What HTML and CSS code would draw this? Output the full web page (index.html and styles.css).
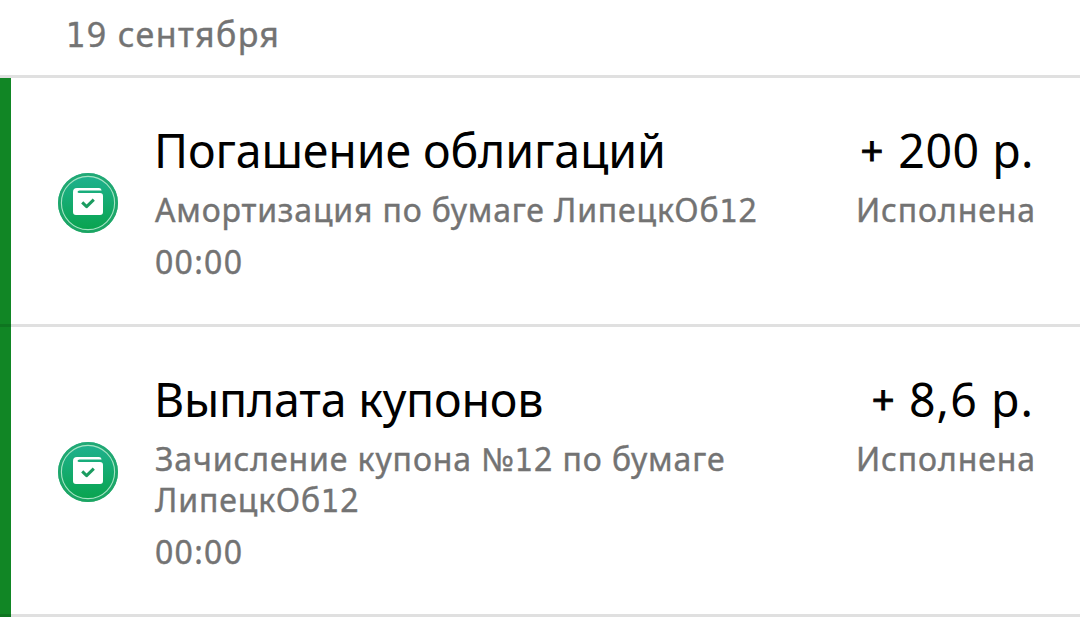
FILE: index.html
```html
<!DOCTYPE html>
<html lang="ru">
<head>
<meta charset="utf-8">
<title>История операций</title>
<link rel="stylesheet" href="styles.css">
</head>
<body>
<svg class="defs" aria-hidden="true">
  <defs>
    <linearGradient id="disc" x1="0" y1="0" x2="0" y2="1">
      <stop offset="0" stop-color="#20b292"/>
      <stop offset="1" stop-color="#08a34b"/>
    </linearGradient>
    <symbol id="wallet" viewBox="0 0 60 60">
      <circle cx="30" cy="30" r="30" fill="url(#disc)"/>
      <circle cx="30" cy="30" r="28.5" fill="none" stroke="#22a56c" stroke-opacity=".75" stroke-width="3"/>
      <circle cx="30" cy="30" r="26.6" fill="none" stroke="#a5e4c4" stroke-width="1.1"/>
      <path fill="#fff" d="M19 15H41Q43 15 43.5 17V17.6H21.5Q19.5 17.8 19.5 19Q19.5 20 21.5 20H42Q45 20 45 23V39Q45 42 42 42H18Q15 42 15 39V19Q15 15 19 15Z"/>
      <path fill="none" stroke="#1b9c60" stroke-width="3" stroke-linejoin="round" d="M24.2 29.4L28.6 33.6L35.8 26.6"/>
    </symbol>
  </defs>
</svg>
<main class="history">
  <h2 class="date"><span class="text date-text"><span class="one">1</span>9 сентября</span></h2>
  <article class="operation">
    <svg class="icon"><use href="#wallet"/></svg>
    <div class="details">
      <h3 class="title"><span class="text title-a">Погашение облигаций</span></h3>
      <p class="description"><span class="text desc-a">Амортизация по бумаге ЛипецкОб<span class="one">1</span>2</span></p>
      <p class="time"><span class="text time-text">00:00</span></p>
    </div>
    <div class="result">
      <p class="amount"><span class="text amount-a"><span class="plus">+</span> 200 р.</span></p>
      <p class="status"><span class="text status-text">Исполнена</span></p>
    </div>
  </article>
  <article class="operation">
    <svg class="icon"><use href="#wallet"/></svg>
    <div class="details">
      <h3 class="title"><span class="text title-b">Выплата купонов</span></h3>
      <p class="description"><span class="text desc">Зачисление купона №<span class="one">1</span>2 по бумаге</span><br><span class="text desc">ЛипецкОб<span class="one">1</span>2</span></p>
      <p class="time"><span class="text time-text">00:00</span></p>
    </div>
    <div class="result">
      <p class="amount"><span class="text amount-b"><span class="plus">+</span> 8,6 р.</span></p>
      <p class="status"><span class="text status-text">Исполнена</span></p>
    </div>
  </article>
</main>
</body>
</html>
```
FILE: styles.css
```css
* { box-sizing: border-box; }
body {
  margin: 0;
  background: #fff;
  font-family: "Noto Sans", sans-serif;
  color: #000;
  overflow: hidden;
}
h2, h3, p { margin: 0; font-weight: 400; }
.defs { position: absolute; width: 0; height: 0; }
.text { white-space: nowrap; }
.one { font-family: "DejaVu Sans Condensed", "DejaVu Sans", sans-serif; line-height: 1; font-stretch: condensed; }
.date {
  height: 78px;
  padding: 14px 0 0 66px;
  border-bottom: 3px solid rgba(0, 0, 0, .12);
  font-size: 34px;
  line-height: 40px;
  color: #737373;
  -webkit-text-stroke: .4px #737373;
}
.date-text { letter-spacing: 1.35px; }
.operation {
  display: flex;
  align-items: center;
  padding: 43px 44px 42px 58px;
  border-bottom: 3px solid rgba(0, 0, 0, .12);
  background: linear-gradient(#118625, #118625) 0 0 / 11px 100% no-repeat border-box;
}
.icon { flex: none; width: 60px; height: 60px; margin: 2.4px 37px 0 0; }
.details { flex: 1; }
.title, .amount { font-size: 46.5px; line-height: 56px; height: 57px; padding-top: 1px; margin-bottom: 11px; }
.title { margin-left: -1px; }
.title-a { letter-spacing: -.13px; }
.title-b { letter-spacing: -.22px; }
.description, .time, .status {
  font-size: 32px;
  line-height: 41px;
  color: #737373;
  -webkit-text-stroke: .4px #737373;
}
.desc { letter-spacing: .9px; }
.desc-a { letter-spacing: .83px; }
.time { margin-top: 11px; }
.time-text { letter-spacing: 1.3px; }
.result { align-self: flex-start; text-align: right; white-space: nowrap; }
.amount { padding-right: 2px; }
.amount-a { letter-spacing: .5px; }
.amount-a .plus { margin-right: 2px; }
.amount-b { letter-spacing: 1.1px; }
.plus { font-size: 40px; line-height: 1; vertical-align: 3px; -webkit-text-stroke: .9px #000; }
.status-text { letter-spacing: .9px; }
```
